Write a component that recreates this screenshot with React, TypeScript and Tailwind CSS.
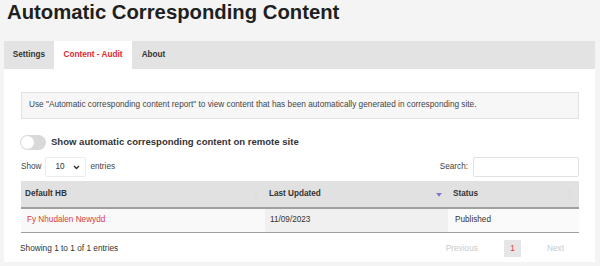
import * as React from "react";

const SortBoth = () => (
  <svg width="6" height="10" viewBox="0 0 6 10" className="shrink-0">
    <path d="M3 0.5 L5.5 3.8 H0.5 Z" fill="#dcdcdc" />
    <path d="M3 9.5 L5.5 6.2 H0.5 Z" fill="#dcdcdc" />
  </svg>
);

const SortDesc = () => (
  <svg width="6" height="10" viewBox="0 0 6 10" className="shrink-0">
    <path d="M3 7.8 L5.8 4 H0.2 Z" fill="#7a72d8" />
  </svg>
);

const tabs = [
  { label: "Settings", active: false, w: "w-[50px]" },
  { label: "Content - Audit", active: true, w: "w-[78px]" },
  { label: "About", active: false, w: "w-[43px]" },
];

export default function App() {
  const [remote, setRemote] = React.useState(false);

  return (
    <div className="min-h-[266px] bg-[#f4f4f4] font-['Liberation_Sans',Arial,sans-serif] text-[#333]">
      <h1 className="h-[41px] pl-[7px] text-[20.3px] font-bold leading-[24px] text-[#1f1f1f]">
        Automatic Corresponding Content
      </h1>

      <div className="ml-[4px] mr-[5px]">
        {/* Tabs */}
        <div className="flex h-[28px] bg-[#e3e3e3] text-[8.2px] font-bold">
          {tabs.map(t => (
            <div
              key={t.label}
              className={`${t.w} flex items-center justify-center ${t.active ? "bg-white text-[#e0282f]" : "text-[#333]"}`}
            >
              {t.label}
            </div>
          ))}
        </div>

        {/* Panel */}
        <div className="h-[193px] bg-white pl-[17px] pr-[16px] pt-[23px]">
          <div className="flex h-[27px] items-center border border-[#e2e2e2] bg-[#f7f7f7] pl-[7px] text-[8.25px] text-[#444]">
            Use "Automatic corresponding content report" to view content that has been automatically generated in corresponding site.
          </div>

          <div className="mt-[16px] flex h-[15px] items-center">
            <button
              onClick={() => setRemote(r => !r)}
              className={`relative -ml-[1px] h-[15px] w-[26px] rounded-full ${remote ? "bg-[#e0282f]" : "bg-[#d9d9d9]"}`}
            >
              <span
                className={`absolute top-[1px] h-[13px] w-[13px] rounded-full bg-white ${remote ? "left-[12px]" : "left-[1px]"}`}
              />
            </button>
            <span className="ml-[5px] text-[9.55px] font-bold text-[#333]">
              Show automatic corresponding content on remote site
            </span>
          </div>

          <div className="mt-[7px] flex h-[20px] items-center justify-between text-[8.2px] text-[#444]">
            <div className="flex items-center">
              <span>Show</span>
              <div className="ml-[4px] flex h-[20px] w-[41px] items-center justify-between rounded-[2px] border border-[#ececec] bg-white pl-[9px] pr-[5px]">
                <span className="text-[#333]">10</span>
                <svg width="7" height="5" viewBox="0 0 7 5">
                  <path d="M1 1 L3.5 3.5 L6 1" stroke="#333" strokeWidth="1.4" fill="none" />
                </svg>
              </div>
              <span className="ml-[4px]">entries</span>
            </div>
            <div className="flex items-center">
              <span>Search:</span>
              <input className="ml-[5px] h-[20px] w-[106px] rounded-[2px] border border-[#e2e2e2] bg-white outline-none" />
            </div>
          </div>

          {/* Table */}
          <table className="mt-[4px] w-full table-fixed border-collapse text-[8.2px]">
            <colgroup>
              <col className="w-[244px]" />
              <col className="w-[183px]" />
              <col />
            </colgroup>
            <thead>
              <tr className="h-[27px] border-b-2 border-[#a0a0a0] bg-[#e1e1e1] text-left font-bold text-[#333]">
                <th className="pl-[4px] pr-[6px]">
                  <div className="flex items-center justify-between">
                    <span>Default HB</span>
                    <SortBoth />
                  </div>
                </th>
                <th className="pl-[4px] pr-[6px]">
                  <div className="flex items-center justify-between">
                    <span>Last Updated</span>
                    <SortDesc />
                  </div>
                </th>
                <th className="pl-[5px] pr-[6px]">
                  <div className="flex items-center justify-between">
                    <span>Status</span>
                    <SortBoth />
                  </div>
                </th>
              </tr>
            </thead>
            <tbody>
              <tr className="h-[24px] border-b-[1.5px] border-[#a0a0a0]">
                <td className="bg-[#f9f9f9] pl-[6px] text-[#dc3b35]">Fy Nhudalen Newydd</td>
                <td className="bg-[#f0f0f0] pl-[5px] text-[#333]">11/09/2023</td>
                <td className="bg-[#fafafa] pl-[7px] text-[#333]">Published</td>
              </tr>
            </tbody>
          </table>

          <div className="mt-[7px] flex h-[17px] items-center justify-between text-[8.3px]">
            <span className="-ml-[1px] text-[#333]">Showing 1 to 1 of 1 entries</span>
            <div className="flex items-center pr-[15px]">
              <span className="text-[#c9c9c9]">Previous</span>
              <span className="ml-[26px] flex h-[17px] w-[17px] items-center justify-center bg-[#e6e6e6] text-[#dc3b35]">1</span>
              <span className="ml-[26px] text-[#c9c9c9]">Next</span>
            </div>
          </div>
        </div>
      </div>
    </div>
  );
}
